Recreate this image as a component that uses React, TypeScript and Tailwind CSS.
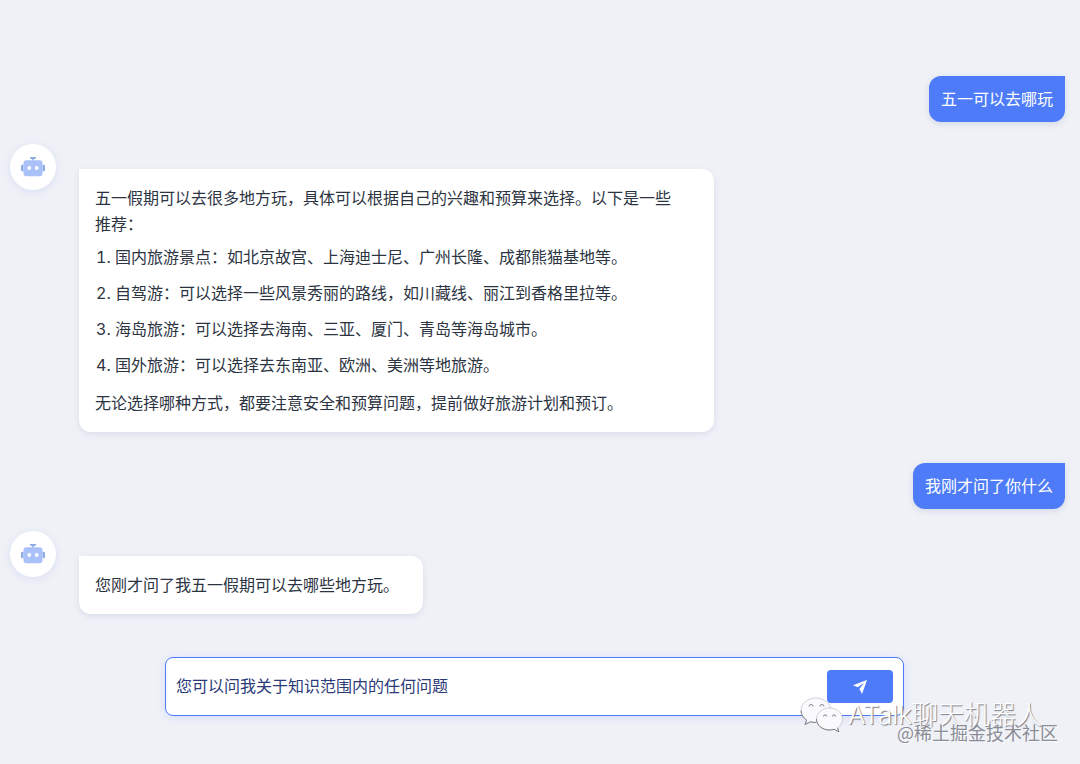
import { useState, type ReactNode } from "react";

const places = [
  "国内旅游景点：如北京故宫、上海迪士尼、广州长隆、成都熊猫基地等。",
  "自驾游：可以选择一些风景秀丽的路线，如川藏线、丽江到香格里拉等。",
  "海岛旅游：可以选择去海南、三亚、厦门、青岛等海岛城市。",
  "国外旅游：可以选择去东南亚、欧洲、美洲等地旅游。",
];

function RobotIcon() {
  return (
    <svg viewBox="0 0 24 20" className="w-6 h-5" aria-hidden="true">
      <path d="M9 0h6v1.500l-2.200.7V3.500h-1.600V2.200L9 1.500z" fill="#8fabe6" />
      <path d="M2.500 7.800v6.400H1.300A1.300 1.300 0 0 1 0 12.900V9.100a1.300 1.300 0 0 1 1.300-1.300zM21.500 7.800v6.400h1.200a1.300 1.300 0 0 0 1.300-1.300V9.100a1.300 1.300 0 0 0-1.300-1.300z" fill="#8fabe6" />
      <rect x="2.500" y="3.200" width="19" height="16" rx="3" fill="#a9c1f8" />
      <circle cx="8.300" cy="11" r="1.900" fill="#fff" />
      <circle cx="15.700" cy="11" r="1.900" fill="#fff" />
    </svg>
  );
}

function UserMessage({ children }: { children: ReactNode }) {
  return (
    <div className="flex justify-end">
      <div className="rounded-xl rounded-tr-none bg-[#4e7cf9] px-3 pt-[9px] pb-[11px] leading-[26px] text-white shadow-[0_2px_6px_rgba(60,80,130,0.14)]">
        {children}
      </div>
    </div>
  );
}

function BotMessage({ children }: { children: ReactNode }) {
  return (
    <div className="flex items-start gap-[23px]">
      <div className="flex size-[46px] shrink-0 items-center justify-center rounded-full bg-white shadow-[0_2px_8px_rgba(80,110,220,0.12)]">
        <RobotIcon />
      </div>
      <div className="mt-[25px] max-w-[635px] rounded-xl rounded-tl-none bg-white pt-[15px] pb-[17px] pl-4 pr-6 leading-[26px] text-[#2c3442] shadow-[0_2px_6px_rgba(60,80,130,0.12)]">
        {children}
      </div>
    </div>
  );
}

function Watermark() {
  return (
    <div className="pointer-events-none absolute right-[22px] bottom-5 flex flex-col items-end">
      <div className="mr-4 flex items-center">
        <svg viewBox="0 0 44 36" className="mr-1 h-9 w-11" aria-hidden="true">
          <g fill="#fafafd" stroke="#a4a6af" strokeWidth="0.5">
            <path d="M16 1C7.500 1 1 6.500 1 13.500c0 4 2.200 7.300 5.600 9.600L5 27.500l5.400-2.700c1.800.5 3.600.7 5.600.7 8.500 0 15-5.300 15-12S24.500 1 16 1z" />
            <path d="M29.500 11C22 11 16.500 16 16.500 22s5.500 11 13 11c1.600 0 3.200-.2 4.600-.7l4.800 2.500-1.300-4c3-2 4.900-5 4.900-8.800 0-6-5.500-11-13-11z" />
          </g>
          {/* lower edges are shaded */}
          <g fill="none" stroke="#80828c" strokeWidth="1">
            <path d="M1 13.500c0 4 2.200 7.300 5.600 9.600L5 27.500l5.400-2.700c1.800.5 3.600.7 5.600.7" />
            <path d="M16.500 22c0 6 5.500 11 13 11 1.600 0 3.200-.2 4.600-.7l4.800 2.500-1.300-4" />
            <path d="M9 9.500a2 2 0 0 1 4 0M20 9.500a2 2 0 0 1 4 0" />
            <path d="M23.500 19.500a1.600 1.600 0 0 1 3.200 0M32.500 19.500a1.600 1.600 0 0 1 3.200 0" />
          </g>
        </svg>
        <span className="font-['Inter','Noto_Sans_CJK_SC',sans-serif] text-[26px] font-light leading-9 text-white [text-shadow:1px_1px_1px_#777a85]">
          ATalk聊天机器人
        </span>
      </div>
      <span className="-mt-[13px] text-[18px] leading-6 text-[#8b8d96] [text-shadow:1px_1px_0_#fafafd]">
        @稀土掘金技术社区
      </span>
    </div>
  );
}

export default function App() {
  const [question, setQuestion] = useState("");

  return (
    <main
      lang="zh-CN"
      className="relative min-h-screen bg-[#eff1f7] pt-[76px] pb-12 font-['Noto_Sans_CJK_SC',sans-serif] text-base"
    >
      <div className="flex flex-col gap-[22px] pl-[10px] pr-[15px]">
        <UserMessage>五一可以去哪玩</UserMessage>
        <BotMessage>
          <p className="pr-1">
            五一假期可以去很多地方玩，具体可以根据自己的兴趣和预算来选择。以下是一些推荐：
          </p>
          <ol className="mt-[7px] mb-3 flex list-decimal flex-col gap-[10px] pl-5 marker:font-['Inter']">
            {places.map((place) => (
              <li key={place}>{place}</li>
            ))}
          </ol>
          <p>无论选择哪种方式，都要注意安全和预算问题，提前做好旅游计划和预订。</p>
        </BotMessage>
        <div className="mt-[9px]">
          <UserMessage>我刚才问了你什么</UserMessage>
        </div>
        <BotMessage>
          <p>您刚才问了我五一假期可以去哪些地方玩。</p>
        </BotMessage>
      </div>

      <form
        onSubmit={(e) => e.preventDefault()}
        className="mt-[43px] mr-[176px] ml-[165px] flex items-center rounded-lg border border-[#4e7cf9] bg-white py-3 px-[10px] shadow-[0_2px_8px_rgba(78,124,249,0.15)]"
      >
        <input
          type="text"
          aria-label="您可以问我关于知识范围内的任何问题"
          placeholder="您可以问我关于知识范围内的任何问题"
          value={question}
          onChange={(e) => setQuestion(e.target.value)}
          className="min-w-0 flex-1 bg-transparent pb-[3px] text-[#2b3a78] outline-none placeholder:text-[#2b3a78]"
        />
        <button
          type="submit"
          aria-label="发送"
          className="flex h-[33px] w-[66px] items-center justify-center rounded bg-[#4e7cf9]"
        >
          <svg viewBox="0 0 14 14" className="size-[14px]" fill="#fff" aria-hidden="true">
            <path d="M14 0 0 5.300l4.800 2L11 2.700 6.400 8.900 9 14z" />
          </svg>
        </button>
      </form>

      <Watermark />
    </main>
  );
}
